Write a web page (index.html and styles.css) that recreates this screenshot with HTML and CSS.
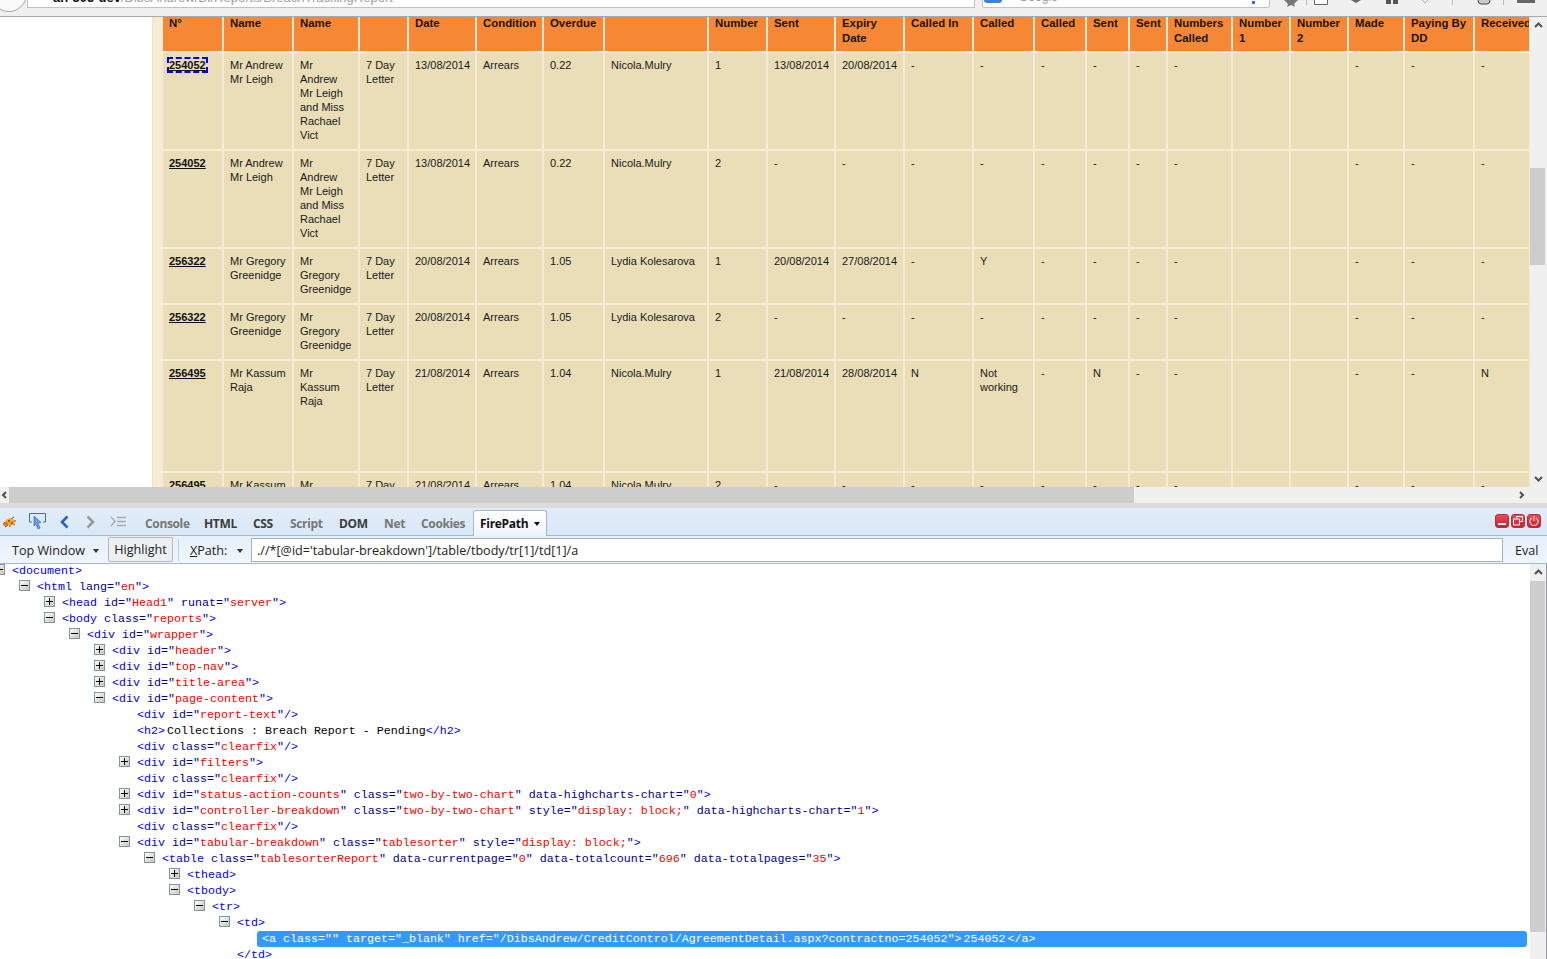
FILE: index.html
```html
<!DOCTYPE html>
<html lang="en">
<head>
<meta charset="utf-8">
<title>Breach Report</title>
<link rel="stylesheet" href="styles.css">
</head>
<body>
<header class="chrome">
  <div class="back-btn"></div>
  <svg class="reload" width="14" height="6" viewBox="0 0 14 6"><path d="M1 0a6 6 0 0 0 12 0" fill="none" stroke="#999" stroke-width="2"/></svg>
  <div class="urlbar"><span class="url-host">an-305-dev</span><span class="url-path">/DibsAndrew/BI/Reports/BreachTrackingReport</span></div>
  <div class="searchbar"><span class="g-badge"></span><span class="search-text">Google</span><span class="search-arrow"></span></div>
  <div class="tools">
    <svg class="tool t-star" width="14" height="7" viewBox="0 0 14 7"><path d="M0 0h14l-4 4 1 3-4-2-4 2 1-3z" fill="#777"/></svg>
    <i class="tool-sep"></i>
    <svg class="tool t-box" width="14" height="5" viewBox="0 0 14 5"><path d="M.5 0v4.500h13V0" fill="#fff" stroke="#666"/></svg>
    <svg class="tool t-arrow" width="10" height="3" viewBox="0 0 10 3"><path d="M0 0h10L5 3z" fill="#666"/></svg>
    <svg class="tool t-blocks" width="12" height="4" viewBox="0 0 12 4"><path d="M0 0h5v4H0zM7 0h5v4H7z" fill="#555"/></svg>
    <svg class="tool t-check" width="8" height="3" viewBox="0 0 8 3"><path d="M1 0l3 3 3-3" fill="none" stroke="#aaa"/></svg>
    <i class="tool-sep"></i>
    <svg class="tool t-face" width="14" height="5" viewBox="0 0 14 5"><path d="M1 0q0 4 3 4h6q3 0 3-4" fill="#ccc" stroke="#444"/></svg>
    <i class="tool-sep"></i>
    <span class="t-menu"></span>
  </div>
</header>

<section class="page">
  <div class="page-row">
    <main class="viewport">
      <div class="report-panel">
        <table class="report">
          <colgroup>
            <col class="w59"><col class="w68"><col class="w64"><col class="w47"><col class="w66"><col class="w65"><col class="w59"><col class="w102"><col class="w57"><col class="w66"><col class="w67"><col class="w67"><col class="w59"><col class="w50"><col class="w41"><col class="w36"><col class="w63"><col class="w56"><col class="w56"><col class="w54"><col class="w68"><col class="w80">
          </colgroup>
          <thead>
            <tr><th>N°</th><th>Name</th><th>Name</th><th></th><th>Date</th><th>Condition</th><th>Overdue</th><th></th><th>Number</th><th>Sent</th><th>Expiry Date</th><th>Called In</th><th>Called</th><th>Called</th><th>Sent</th><th>Sent</th><th>Numbers Called</th><th>Number 1</th><th>Number 2</th><th>Made</th><th>Paying By DD</th><th>Received</th></tr>
          </thead>
          <tbody>
            <tr><td><a class="focused" href="#">254052</a></td><td>Mr Andrew Mr Leigh</td><td>Mr Andrew Mr Leigh and Miss Rachael Vict</td><td>7 Day Letter</td><td>13/08/2014</td><td>Arrears</td><td>0.22</td><td>Nicola.Mulry</td><td>1</td><td>13/08/2014</td><td>20/08/2014</td><td>-</td><td>-</td><td>-</td><td>-</td><td>-</td><td>-</td><td></td><td></td><td>-</td><td>-</td><td>-</td></tr>
            <tr><td><a href="#">254052</a></td><td>Mr Andrew Mr Leigh</td><td>Mr Andrew Mr Leigh and Miss Rachael Vict</td><td>7 Day Letter</td><td>13/08/2014</td><td>Arrears</td><td>0.22</td><td>Nicola.Mulry</td><td>2</td><td>-</td><td>-</td><td>-</td><td>-</td><td>-</td><td>-</td><td>-</td><td>-</td><td></td><td></td><td>-</td><td>-</td><td>-</td></tr>
            <tr><td><a href="#">256322</a></td><td>Mr Gregory Greenidge</td><td>Mr Gregory Greenidge</td><td>7 Day Letter</td><td>20/08/2014</td><td>Arrears</td><td>1.05</td><td>Lydia Kolesarova</td><td>1</td><td>20/08/2014</td><td>27/08/2014</td><td>-</td><td>Y</td><td>-</td><td>-</td><td>-</td><td>-</td><td></td><td></td><td>-</td><td>-</td><td>-</td></tr>
            <tr><td><a href="#">256322</a></td><td>Mr Gregory Greenidge</td><td>Mr Gregory Greenidge</td><td>7 Day Letter</td><td>20/08/2014</td><td>Arrears</td><td>1.05</td><td>Lydia Kolesarova</td><td>2</td><td>-</td><td>-</td><td>-</td><td>-</td><td>-</td><td>-</td><td>-</td><td>-</td><td></td><td></td><td>-</td><td>-</td><td>-</td></tr>
            <tr class="tall"><td><a href="#">256495</a></td><td>Mr Kassum Raja</td><td>Mr Kassum Raja</td><td>7 Day Letter</td><td>21/08/2014</td><td>Arrears</td><td>1.04</td><td>Nicola.Mulry</td><td>1</td><td>21/08/2014</td><td>28/08/2014</td><td>N</td><td>Not working</td><td>-</td><td>N</td><td>-</td><td>-</td><td></td><td></td><td>-</td><td>-</td><td>N</td></tr>
            <tr class="tall"><td><a href="#">256495</a></td><td>Mr Kassum Raja</td><td>Mr Kassum Raja</td><td>7 Day Letter</td><td>21/08/2014</td><td>Arrears</td><td>1.04</td><td>Nicola.Mulry</td><td>2</td><td>-</td><td>-</td><td>-</td><td>-</td><td>-</td><td>-</td><td>-</td><td>-</td><td></td><td></td><td>-</td><td>-</td><td>-</td></tr>
          </tbody>
        </table>
      </div>
    </main>
    <aside class="vscroll page-vscroll">
      <svg class="arrow" width="17" height="17" viewBox="0 0 17 17"><path d="M5 10l3.500-3.500L12 10" fill="none" stroke="#505050" stroke-width="2"/></svg>
      <div class="track"><div class="thumb page-thumb"></div></div>
      <svg class="arrow" width="17" height="17" viewBox="0 0 17 17"><path d="M5 7l3.500 3.500L12 7" fill="none" stroke="#505050" stroke-width="2"/></svg>
    </aside>
  </div>
  <div class="hscroll">
    <svg class="arrow" width="9" height="16" viewBox="0 0 9 16"><path d="M6 5L3 8l3 3" fill="none" stroke="#505050" stroke-width="2"/></svg>
    <div class="htrack"><div class="hthumb"></div></div>
    <svg class="arrow" width="17" height="16" viewBox="0 0 17 16"><path d="M7 5l3 3-3 3" fill="none" stroke="#505050" stroke-width="2"/></svg>
    <div class="corner"></div>
  </div>
</section>

<div class="splitter"></div>

<section class="firebug">
  <nav class="fb-tabs">
    <svg class="ic-bug" width="15" height="12" viewBox="0 0 15 12"><path d="M1 8L5 5" stroke="#7a5a2a"/><path d="M12 1L9 3M14 5h-3M13 9l-3-2M3 11l3-2M8 11l0-2" stroke="#6a4a1a"/><ellipse cx="8" cy="6" rx="4.500" ry="3.500" fill="#f2a81e"/><ellipse cx="3.500" cy="8" rx="2.500" ry="2" fill="#e8701a"/><circle cx="7" cy="5" r="1" fill="#a33"/><circle cx="10" cy="7" r="1" fill="#a33"/></svg>
    <svg class="ic-inspect" width="17" height="19" viewBox="0 0 17 19"><path d="M3 9H.5V.5h16V9H14" fill="#dfe9f8" stroke="#3a6fb8"/><path d="M5 3l7 6.500-3 .5 2 5-2 1-2-5-2 2z" fill="#6e9bd8" stroke="#3a6fb8" stroke-width=".7"/></svg>
    <svg class="ic-nav" width="9" height="14" viewBox="0 0 9 14"><path d="M7.500 1.500L2 7l5.500 5.500" fill="none" stroke="#2462c2" stroke-width="2.600"/></svg>
    <svg class="ic-nav ic-fwd" width="9" height="14" viewBox="0 0 9 14"><path d="M1.500 1.500L7 7l-5.500 5.500" fill="none" stroke="#9b9b9b" stroke-width="2.600"/></svg>
    <svg class="ic-cmd" width="17" height="11" viewBox="0 0 17 11"><path d="M1 1l4 4.500L1 10" fill="none" stroke="#a9a9a9" stroke-width="1.400"/><path d="M7 1.500h9M7 5.500h9M7 9.500h9" stroke="#a9a9a9" stroke-width="1.600"/></svg>
    <span class="tab muted t-console">Console</span>
    <span class="tab t-html">HTML</span>
    <span class="tab t-css">CSS</span>
    <span class="tab muted t-script">Script</span>
    <span class="tab t-dom">DOM</span>
    <span class="tab muted t-net">Net</span>
    <span class="tab muted t-cookies">Cookies</span>
    <span class="tab-active">FirePath<i class="caret dark"></i></span>
    <div class="win-btns">
      <span class="win-btn"><svg width="10" height="10" viewBox="0 0 10 10"><path d="M1 7h8v2H1z" fill="#fff"/></svg></span>
      <span class="win-btn"><svg width="10" height="10" viewBox="0 0 10 10"><path d="M3.500 2.500V.5h6v5H7M.5 3h6v6h-6z" fill="none" stroke="#fff"/></svg></span>
      <span class="win-btn"><svg width="10" height="10" viewBox="0 0 10 10"><path d="M3 2a4 4 0 1 0 4 0M5 0v5" fill="none" stroke="#f3c6c6" stroke-width="1.200"/></svg></span>
    </div>
  </nav>
  <div class="fb-path">
    <span class="win-select">Top Window<i class="caret"></i></span>
    <span class="highlight-btn">Highlight</span>
    <span class="xpath-label"><u>X</u>Path:<i class="caret"></i></span>
    <span class="xpath-input">.//*[@id='tabular-breakdown']/table/tbody/tr[1]/td[1]/a</span>
    <span class="eval">Eval</span>
  </div>
  <div class="fb-body">
    <div class="tree">
      <div class="node l0"><i class="tg minus"></i><span class="t">&lt;document&gt;</span></div>
      <div class="node l1"><i class="tg minus"></i><span class="t">&lt;html</span> <span class="n">lang="</span><span class="v">en</span><span class="n">"</span><span class="t">&gt;</span></div>
      <div class="node l2"><i class="tg plus"></i><span class="t">&lt;head</span> <span class="n">id="</span><span class="v">Head1</span><span class="n">" runat="</span><span class="v">server</span><span class="n">"</span><span class="t">&gt;</span></div>
      <div class="node l2"><i class="tg minus"></i><span class="t">&lt;body</span> <span class="n">class="</span><span class="v">reports</span><span class="n">"</span><span class="t">&gt;</span></div>
      <div class="node l3"><i class="tg minus"></i><span class="t">&lt;div</span> <span class="n">id="</span><span class="v">wrapper</span><span class="n">"</span><span class="t">&gt;</span></div>
      <div class="node l4"><i class="tg plus"></i><span class="t">&lt;div</span> <span class="n">id="</span><span class="v">header</span><span class="n">"</span><span class="t">&gt;</span></div>
      <div class="node l4"><i class="tg plus"></i><span class="t">&lt;div</span> <span class="n">id="</span><span class="v">top-nav</span><span class="n">"</span><span class="t">&gt;</span></div>
      <div class="node l4"><i class="tg plus"></i><span class="t">&lt;div</span> <span class="n">id="</span><span class="v">title-area</span><span class="n">"</span><span class="t">&gt;</span></div>
      <div class="node l4"><i class="tg minus"></i><span class="t">&lt;div</span> <span class="n">id="</span><span class="v">page-content</span><span class="n">"</span><span class="t">&gt;</span></div>
      <div class="node l5"><i class="tg none"></i><span class="t">&lt;div</span> <span class="n">id="</span><span class="v">report-text</span><span class="n">"</span><span class="t">/&gt;</span></div>
      <div class="node l5"><i class="tg none"></i><span class="t">&lt;h2&gt;</span><span class="txt">Collections : Breach Report - Pending</span><span class="t">&lt;/h2&gt;</span></div>
      <div class="node l5"><i class="tg none"></i><span class="t">&lt;div</span> <span class="n">class="</span><span class="v">clearfix</span><span class="n">"</span><span class="t">/&gt;</span></div>
      <div class="node l5"><i class="tg plus"></i><span class="t">&lt;div</span> <span class="n">id="</span><span class="v">filters</span><span class="n">"</span><span class="t">&gt;</span></div>
      <div class="node l5"><i class="tg none"></i><span class="t">&lt;div</span> <span class="n">class="</span><span class="v">clearfix</span><span class="n">"</span><span class="t">/&gt;</span></div>
      <div class="node l5"><i class="tg plus"></i><span class="t">&lt;div</span> <span class="n">id="</span><span class="v">status-action-counts</span><span class="n">" class="</span><span class="v">two-by-two-chart</span><span class="n">" data-highcharts-chart="</span><span class="v">0</span><span class="n">"</span><span class="t">&gt;</span></div>
      <div class="node l5"><i class="tg plus"></i><span class="t">&lt;div</span> <span class="n">id="</span><span class="v">controller-breakdown</span><span class="n">" class="</span><span class="v">two-by-two-chart</span><span class="n">" style="</span><span class="v">display: block;</span><span class="n">" data-highcharts-chart="</span><span class="v">1</span><span class="n">"</span><span class="t">&gt;</span></div>
      <div class="node l5"><i class="tg none"></i><span class="t">&lt;div</span> <span class="n">class="</span><span class="v">clearfix</span><span class="n">"</span><span class="t">/&gt;</span></div>
      <div class="node l5"><i class="tg minus"></i><span class="t">&lt;div</span> <span class="n">id="</span><span class="v">tabular-breakdown</span><span class="n">" class="</span><span class="v">tablesorter</span><span class="n">" style="</span><span class="v">display: block;</span><span class="n">"</span><span class="t">&gt;</span></div>
      <div class="node l6"><i class="tg minus"></i><span class="t">&lt;table</span> <span class="n">class="</span><span class="v">tablesorterReport</span><span class="n">" data-currentpage="</span><span class="v">0</span><span class="n">" data-totalcount="</span><span class="v">696</span><span class="n">" data-totalpages="</span><span class="v">35</span><span class="n">"</span><span class="t">&gt;</span></div>
      <div class="node l7"><i class="tg plus"></i><span class="t">&lt;thead&gt;</span></div>
      <div class="node l7"><i class="tg minus"></i><span class="t">&lt;tbody&gt;</span></div>
      <div class="node l8"><i class="tg minus"></i><span class="t">&lt;tr&gt;</span></div>
      <div class="node l9"><i class="tg minus"></i><span class="t">&lt;td&gt;</span></div>
      <div class="node selected"><span>&lt;a class="" target="_blank" href="/DibsAndrew/CreditControl/AgreementDetail.aspx?contractno=254052"&gt;</span><span class="txt">254052</span><span class="txt">&lt;/a&gt;</span></div>
      <div class="node l9"><i class="tg none"></i><span class="t">&lt;/td&gt;</span></div>
    </div>
    <aside class="vscroll tree-vscroll">
      <svg class="arrow" width="17" height="17" viewBox="0 0 17 17"><path d="M5 10l3.500-3.500L12 10" fill="none" stroke="#505050" stroke-width="2"/></svg>
      <div class="track"><div class="thumb tree-thumb"></div></div>
    </aside>
  </div>
</section>
</body>
</html>
```
FILE: styles.css
```css
* { box-sizing: border-box; }
html, body { margin: 0; height: 100%; overflow: hidden; background: #fff; }
body { width: 1547px; height: 959px; font-family: "Liberation Sans", Arial, sans-serif; display: flex; flex-direction: column; }
i { font-style: normal; }

/* browser chrome, cut by the top of the window */
.chrome { height: 17px; flex: none; display: flex; position: relative; background: #f0f0f0; border-bottom: 1px solid #a8a8a8; overflow: hidden; }
.back-btn { position: absolute; left: -9px; top: -24px; width: 36px; height: 36px; border-radius: 50%; background: #fafafa; border: 1px solid #a5a5a5; }
.reload { position: absolute; left: 32px; top: 0; }
.urlbar { position: absolute; left: 27px; top: -20px; width: 948px; height: 28px; background: #fff; border: 1px solid #c2c2c2; padding: 9px 0 0 25px; font-size: 13px; line-height: 16px; white-space: nowrap; overflow: hidden; }
.url-host { color: #111; font-weight: bold; }
.url-path { color: #a0a0a0; }
.searchbar { position: absolute; left: 982px; top: -20px; width: 288px; height: 28px; background: #fff; border: 1px solid #c2c2c2; border-radius: 2px; }
.g-badge { position: absolute; left: 1px; top: 15px; width: 18px; height: 7px; background: #3f7fe0; border-radius: 0 0 3px 3px; }
.search-text { position: absolute; left: 36px; top: 9px; font-size: 12px; line-height: 14px; color: #999; }
.search-arrow { position: absolute; right: 14px; top: 20px; width: 3px; height: 3px; background: #3a6fc8; }
.tools { position: absolute; left: 0; top: 0; width: 100%; height: 8px; }
.tool { position: absolute; top: 0; }
.tool-sep { position: absolute; top: 0; width: 1px; height: 5px; background: #bbb; }
.tool-sep:nth-of-type(1) { left: 1306px; }
.tool-sep:nth-of-type(2) { left: 1452px; }
.tool-sep:nth-of-type(3) { left: 1503px; }
.t-star { left: 1284px; }
.t-box { left: 1314px; }
.t-arrow { left: 1351px; }
.t-blocks { left: 1386px; }
.t-check { left: 1421px; }
.t-face { left: 1477px; }
.t-menu { position: absolute; left: 1517px; top: 0; width: 18px; height: 3px; background: #666; }

/* page */
.page { flex: none; height: 486px; background: #f0f0f0; display: flex; flex-direction: column; }
.page-row { flex: none; height: 470px; display: flex; }
.viewport { width: 1530px; height: 470px; overflow: hidden; background: #fff; }
.report-panel { margin: -12px 0 0 152px; padding-left: 8px; border-left: 1px solid #efe2c2; background: #f6ecd3; min-height: 482px; width: 1378px; overflow: hidden; }
.report { table-layout: fixed; width: 1396px; border-collapse: separate; border-spacing: 2px; font-size: 11px; line-height: 14px; color: #1a1a1a; clip-path: inset(0 28px 0 0); }
.report th { background: #f68835; color: #151515; font-size: 11.400px; font-weight: bold; line-height: 15px; text-align: left; vertical-align: top; padding: 9px 0 0 6px; height: 44px; white-space: normal; overflow: visible; }
.report td { background: #e9deb7; vertical-align: top; padding: 5px 6px 7px 6px; }
.report tr.tall td { height: 110px; }
.report a { color: #111; font-weight: bold; text-decoration: underline; }
.report a.focused { outline: 2px dashed #0000e6; outline-offset: 0; }
.w36 { width: 36px; } .w41 { width: 41px; } .w47 { width: 47px; } .w50 { width: 50px; } .w54 { width: 54px; }
.w56 { width: 56px; } .w57 { width: 57px; } .w59 { width: 59px; } .w63 { width: 63px; } .w64 { width: 64px; } .w65 { width: 65px; }
.w66 { width: 66px; } .w67 { width: 67px; } .w68 { width: 68px; } .w80 { width: 80px; } .w102 { width: 102px; }

/* scrollbars */
.vscroll { width: 17px; flex: none; background: #f0f0f0; display: flex; flex-direction: column; }
.arrow { flex: none; display: block; }
.track { flex: 1; display: flex; flex-direction: column; }
.thumb { background: #cdcdcd; }
.page-thumb { width: 15px; margin: 134px 0 0 0; height: 97px; }
.hscroll { height: 16px; flex: none; display: flex; background: #f0f0f0; }
.htrack { width: 1504px; flex: none; }
.hthumb { width: 1125px; height: 16px; background: #cdcdcd; }
.corner { width: 17px; flex: none; }

.splitter { height: 5px; flex: none; background: #dcdcdc; }

/* firebug */
.firebug { flex: 1; display: flex; flex-direction: column; min-height: 0; font-family: "Open Sans", "Liberation Sans", sans-serif; }
.fb-tabs { height: 28px; flex: none; display: flex; align-items: center; position: relative; background: linear-gradient(#e2edf9, #d9e7f7); border-bottom: 1px solid #a9b8c6; }
.ic-bug { position: absolute; left: 2px; top: 8px; }
.ic-inspect { position: absolute; left: 29px; top: 5px; }
.ic-nav { position: absolute; left: 60px; top: 7px; }
.ic-fwd { left: 86px; }
.ic-cmd { position: absolute; left: 110px; top: 8px; }
.tab { position: absolute; top: 8px; font-size: 12px; line-height: 16px; font-weight: 700; color: #3b3b3b; letter-spacing: -.35px; }
.tab.muted { color: #777; }
.t-console { left: 145px; } .t-html { left: 204px; } .t-css { left: 253px; } .t-script { left: 290px; } .t-dom { left: 339px; } .t-net { left: 384px; } .t-cookies { left: 421px; }
.tab-active { position: absolute; left: 473px; top: 2px; width: 74px; height: 26px; background: linear-gradient(#fff, #eef4fc); border: 1px solid #a9b8c6; border-bottom: none; border-radius: 3px 3px 0 0; font-size: 12px; font-weight: 700; line-height: 26px; color: #111; padding-left: 6px; letter-spacing: -.3px; }
.caret { display: inline-block; width: 0; height: 0; border: 3px solid transparent; border-top: 4px solid #333; border-bottom: none; margin-left: 6px; vertical-align: 2px; }
.caret.dark { border-top-color: #111; }
.win-btns { position: absolute; left: 1495px; top: 6px; display: flex; gap: 2px; }
.win-btn { width: 14px; height: 14px; border-radius: 3px; background: linear-gradient(#ea4a55, #c32530); border: 1px solid #b4323a; display: flex; align-items: center; justify-content: center; }

.fb-path { height: 28px; flex: none; display: flex; align-items: center; position: relative; background: linear-gradient(#e6f0fb, #eff5fc); border-bottom: 1px solid #a9b8c6; font-size: 12.600px; color: #222; }
.win-select { position: absolute; left: 12px; top: 6px; line-height: 18px; }
.highlight-btn { position: absolute; left: 108px; top: 1px; width: 65px; height: 25px; background: #edeff1; border: 1px solid #b4b8bc; border-radius: 2px; text-align: center; line-height: 24px; }
.xpath-label { position: absolute; left: 190px; top: 6px; line-height: 18px; }
.xpath-label::before { content: ""; position: absolute; left: -12px; top: -3px; width: 1px; height: 22px; background: #c6ced8; }
.xpath-label .caret { margin-left: 10px; }
.win-select .caret { margin-left: 8px; }
.xpath-input { position: absolute; left: 251px; top: 2px; width: 1252px; height: 24px; background: #fff; border: 1px solid #a9b0b6; line-height: 23px; padding-left: 5px; white-space: nowrap; }
.eval { position: absolute; left: 1515px; top: 6px; line-height: 18px; }

.fb-body { flex: 1; min-height: 0; display: flex; background: #fff; overflow: hidden; }
.tree { width: 1530px; flex: none; margin-top: -1px; font-family: "Liberation Mono", "Courier New", monospace; font-size: 11.670px; overflow: hidden; }
.node { display: block; height: 16px; line-height: 16px; white-space: pre; }
.t { color: #0000e0; }
.n { color: #000088; }
.v { color: #f00000; }
.txt { margin-left: 2px; }
.tg { display: inline-block; vertical-align: -1px; width: 11px; height: 11px; margin: 0 7px 0 -1px; border: 1px solid #7f94aa; background: linear-gradient(135deg, #fff, #c8c4b8); position: relative; }
.tg.none { border: none; background: none; }
.tg.minus::before, .tg.plus::before { content: ""; position: absolute; left: 1px; top: 4px; width: 7px; height: 1px; background: #000; }
.tg.plus::after { content: ""; position: absolute; left: 4px; top: 1px; width: 1px; height: 7px; background: #000; }
.l0 { margin-left: -5px; } .l1 { margin-left: 20px; } .l2 { margin-left: 45px; } .l3 { margin-left: 70px; } .l4 { margin-left: 95px; }
.l5 { margin-left: 120px; } .l6 { margin-left: 145px; } .l7 { margin-left: 170px; } .l8 { margin-left: 195px; } .l9 { margin-left: 220px; }
.selected { margin-left: 257px; width: 1270px; background: #3399ff; color: #fff; border-radius: 3px; padding-left: 5px; }
.tree-vscroll { border-right: 1px solid #8e9aa6; }
.tree-thumb { width: 15px; height: 351px; }
```
